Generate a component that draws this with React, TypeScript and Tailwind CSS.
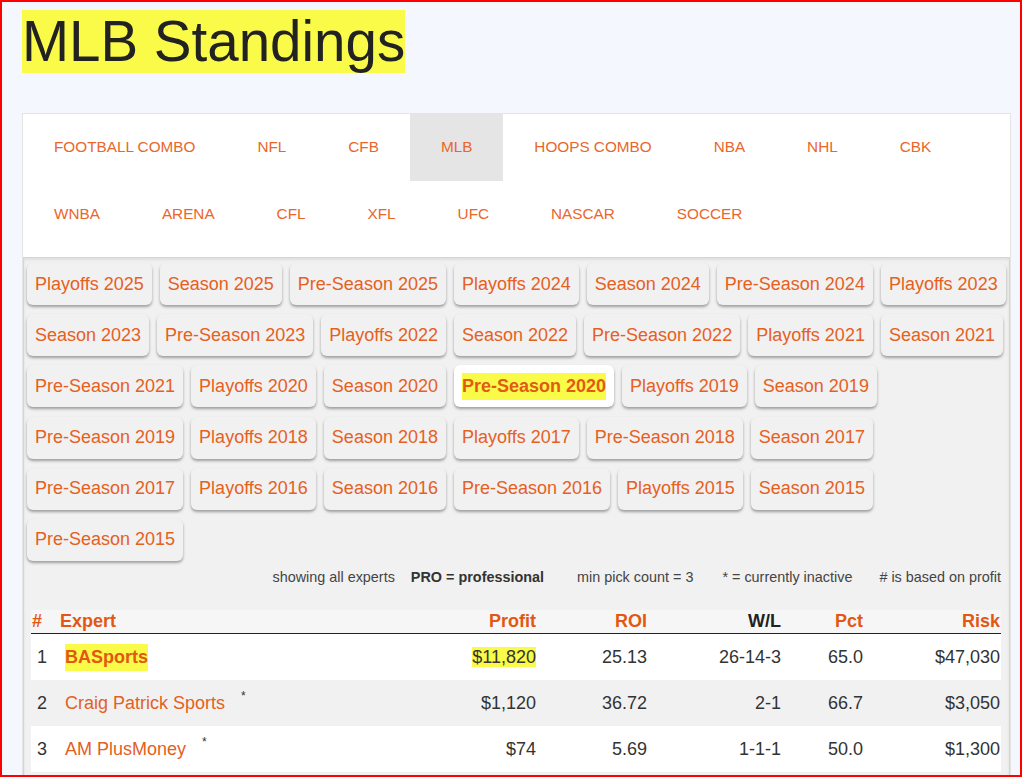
import React from 'react';

const leagues = [
  'FOOTBALL COMBO', 'NFL', 'CFB', 'MLB', 'HOOPS COMBO', 'NBA', 'NHL', 'CBK',
  'WNBA', 'ARENA', 'CFL', 'XFL', 'UFC', 'NASCAR', 'SOCCER',
];

const seasons = [
  'Playoffs 2025', 'Season 2025', 'Pre-Season 2025', 'Playoffs 2024', 'Season 2024', 'Pre-Season 2024', 'Playoffs 2023',
  'Season 2023', 'Pre-Season 2023', 'Playoffs 2022', 'Season 2022', 'Pre-Season 2022', 'Playoffs 2021', 'Season 2021',
  'Pre-Season 2021', 'Playoffs 2020', 'Season 2020', 'Pre-Season 2020', 'Playoffs 2019', 'Season 2019',
  'Pre-Season 2019', 'Playoffs 2018', 'Season 2018', 'Playoffs 2017', 'Pre-Season 2018', 'Season 2017',
  'Pre-Season 2017', 'Playoffs 2016', 'Season 2016', 'Pre-Season 2016', 'Playoffs 2015', 'Season 2015',
  'Pre-Season 2015',
];

type Row = {
  rank: number;
  expert: string;
  inactive?: boolean;
  top?: boolean;
  profit: string;
  roi: string;
  wl: string;
  pct: string;
  risk: string;
};

const rows: Row[] = [
  { rank: 1, expert: 'BASports', top: true, profit: '$11,820', roi: '25.13', wl: '26-14-3', pct: '65.0', risk: '$47,030' },
  { rank: 2, expert: 'Craig Patrick Sports', inactive: true, profit: '$1,120', roi: '36.72', wl: '2-1', pct: '66.7', risk: '$3,050' },
  { rank: 3, expert: 'AM PlusMoney', inactive: true, profit: '$74', roi: '5.69', wl: '1-1-1', pct: '50.0', risk: '$1,300' },
];

export default function App() {
  const selectedLeague = 'MLB';
  const selectedSeason = 'Pre-Season 2020';

  return (
    <div className="w-[1024px] h-[779px] bg-white font-['Liberation_Sans',Arial,sans-serif]">
      <div className="w-[1022px] h-[777px] border-2 border-[#ff0000] bg-[#f4f7fd] overflow-hidden pt-[8px]">
        {/* Title */}
        <h1 className="ml-[20px] text-[56.5px] leading-[63px] h-[63px] text-[#222]">
          <span className="bg-[#fafa48]">MLB Standings</span>
        </h1>

        {/* Card */}
        <div className="ml-[20px] mt-[40px] w-[989px] border border-[#e4e4e4] bg-white">
          {/* League tabs */}
          <div className="flex flex-wrap">
            {leagues.map((l) => (
              <div
                key={l}
                className={
                  'h-[67px] px-[31px] flex items-center text-[15.3px] text-[#ea662a] ' +
                  (l === selectedLeague ? 'bg-[#e5e5e5]' : '')
                }
              >
                {l}
              </div>
            ))}
          </div>

          {/* Gray panel */}
          <div className="mt-[9px] border border-[#d6d6d6] bg-[#f1f1f1] shadow-[inset_0_2px_3px_rgba(0,0,0,0.08)] pb-[40px]">
            <div className="flex flex-wrap gap-x-[8px] gap-y-[9.2px] px-[3px] pt-[5px]">
              {seasons.map((s) =>
                s === selectedSeason ? (
                  <div
                    key={s}
                    className="h-[42px] px-[8px] flex items-center rounded-[6px] bg-white shadow-[0_2px_3px_rgba(0,0,0,0.35)] text-[18px] font-bold text-[#e25a16]"
                  >
                    <span className="bg-[#fafa48]">{s}</span>
                  </div>
                ) : (
                  <div
                    key={s}
                    className="h-[42px] px-[8px] flex items-center rounded-[6px] bg-[#f1f1f1] shadow-[0_2px_3px_rgba(0,0,0,0.35)] text-[18px] text-[#e6601e]"
                  >
                    {s}
                  </div>
                )
              )}
            </div>

            {/* Notes */}
            <div className="mt-[8px] pr-[8px] flex justify-end text-[14.4px] leading-[17px] text-[#444]">
              <span>showing all experts</span>
              <span className="ml-[16px] font-bold text-[#333]">PRO = professional</span>
              <span className="ml-[33px]">min pick count = 3</span>
              <span className="ml-[29px]">* = currently inactive</span>
              <span className="ml-[27px]"># is based on profit</span>
            </div>

            {/* Standings table */}
            <div className="mt-[24px] ml-[7px] mr-[8px] text-[18px]">
              <div className="flex h-[24px] items-center bg-[#f6f6f6] border-b border-[#222] font-bold text-[#e25812] pr-[1px]">
                <div className="w-[29px] pl-[1px]">#</div>
                <div className="flex-1">Expert</div>
                <div className="w-[120px] text-right">Profit</div>
                <div className="w-[111px] text-right">ROI</div>
                <div className="w-[134px] text-right text-[#222]">W/L</div>
                <div className="w-[82px] text-right">Pct</div>
                <div className="w-[137px] text-right">Risk</div>
              </div>
              {rows.map((r, i) => (
                <div
                  key={r.rank}
                  className={
                    'flex h-[46px] items-center text-[#333] pr-[1px] pt-[2px] ' +
                    (i % 2 === 0 ? 'bg-white' : 'bg-[#f1f1f1]')
                  }
                >
                  <div className="w-[29px] pl-[6px]">{r.rank}</div>
                  <div className="flex-1 pl-[5px] flex items-center">
                    {r.top ? (
                      <span className="bg-[#fafa48] font-bold text-[#e25812]">{r.expert}</span>
                    ) : (
                      <span className="text-[#e4601f]">{r.expert}</span>
                    )}
                    {r.inactive && (
                      <span className="ml-[16px] text-[12px] relative -top-[8px]">*</span>
                    )}
                  </div>
                  <div className="w-[120px] text-right">
                    {r.top ? <span className="bg-[#fafa48]">{r.profit}</span> : r.profit}
                  </div>
                  <div className="w-[111px] text-right">{r.roi}</div>
                  <div className="w-[134px] text-right">{r.wl}</div>
                  <div className="w-[82px] text-right">{r.pct}</div>
                  <div className="w-[137px] text-right">{r.risk}</div>
                </div>
              ))}
              <div className="h-[46px] bg-[#f1f1f1]" />
            </div>
          </div>
        </div>
      </div>
    </div>
  );
}
